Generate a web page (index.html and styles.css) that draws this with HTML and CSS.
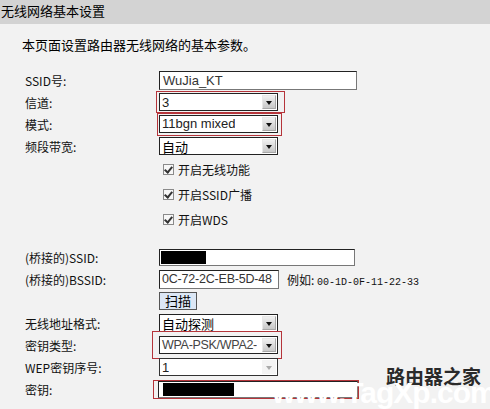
FILE: index.html
```html
<!DOCTYPE html>
<html lang="zh-CN">
<head>
    <meta charset="UTF-8">
    <title>无线网络基本设置</title>
    <link rel="stylesheet" href="styles.css">
</head>
<body>
    <div class="title-bar">无线网络基本设置</div>
    <p class="intro">本页面设置路由器无线网络的基本参数。</p>

    <div class="form">
        <div class="row">
            <div class="label">SSID号:</div>
            <div class="field"><div class="input wide">WuJia_KT</div></div>
        </div>
        <div class="row">
            <div class="label">信道:</div>
            <div class="field">
                <span class="mark mark-a">
                    <div class="select"><span class="val">3</span><span class="arrow"></span></div>
                </span>
            </div>
        </div>
        <div class="row">
            <div class="label">模式:</div>
            <div class="field">
                <span class="mark mark-b">
                    <div class="select"><span class="val">11bgn mixed</span><span class="arrow"></span></div>
                </span>
            </div>
        </div>
        <div class="row">
            <div class="label">频段带宽:</div>
            <div class="field">
                <div class="select"><span class="val cjk">自动</span><span class="arrow"></span></div>
            </div>
        </div>

        <div class="row check-row">
            <div class="label"></div>
            <div class="field"><span class="check"></span>开启无线功能</div>
        </div>
        <div class="row check-row">
            <div class="label"></div>
            <div class="field"><span class="check"></span>开启SSID广播</div>
        </div>
        <div class="row check-row">
            <div class="label"></div>
            <div class="field"><span class="check"></span>开启WDS</div>
        </div>

        <div class="row bridge-first">
            <div class="label">(桥接的)SSID:</div>
            <div class="field"><div class="input bridge"><span class="blackout b1"></span></div></div>
        </div>
        <div class="row">
            <div class="label">(桥接的)BSSID:</div>
            <div class="field">
                <div class="input short">0C-72-2C-EB-5D-48</div>
                <span class="example">例如: <span class="mono">00-1D-0F-11-22-33</span></span>
            </div>
        </div>
        <div class="row">
            <div class="label"></div>
            <div class="field"><button class="scan">扫描</button></div>
        </div>
        <div class="row">
            <div class="label">无线地址格式:</div>
            <div class="field">
                <div class="select"><span class="val cjk">自动探测</span><span class="arrow"></span></div>
            </div>
        </div>
        <div class="row">
            <div class="label">密钥类型:</div>
            <div class="field">
                <span class="mark mark-c">
                    <div class="select"><span class="val grey">WPA-PSK/WPA2-</span><span class="arrow"></span></div>
                </span>
            </div>
        </div>
        <div class="row">
            <div class="label">WEP密钥序号:</div>
            <div class="field">
                <div class="select disabled"><span class="val">1</span><span class="arrow"></span></div>
            </div>
        </div>
        <div class="row">
            <div class="label">密钥:</div>
            <div class="field">
                <span class="mark mark-d">
                    <div class="input key"><span class="blackout b2"></span></div>
                </span>
            </div>
        </div>
    </div>

    <div class="watermark">
        <div class="wm-cn">路由器之家</div>
        <div class="wm-en">www.TagXp.com</div>
    </div>
</body>
</html>
```

FILE: styles.css
```css
body {
    margin: 0;
    width: 490px;
    height: 409px;
    overflow: hidden;
    position: relative;
    background-color: #f2f2f2;
    font-family: "Noto Sans CJK SC", "DejaVu Sans", sans-serif;
    font-size: 12px;
    color: #111;
}
.title-bar {
    height: 24px;
    line-height: 22px;
    padding-left: 1px;
    background-color: #d3d3d3;
    font-size: 13px;
    color: #000;
}
.intro {
    margin: 11px 0 0 22px;
    font-size: 13px;
    line-height: 20px;
    color: #000;
}
.form {
    margin-top: 14px;
}
.row {
    display: flex;
    align-items: center;
    height: 22px;
}
.label {
    width: 134px;
    padding-left: 25px;
    flex-shrink: 0;
}
.field {
    display: flex;
    align-items: center;
}
.input {
    height: 17px;
    box-sizing: border-box;
    background: #fff;
    border: 1px solid #222;
    border-right-color: #777;
    border-bottom-color: #777;
    font-family: "Liberation Sans", sans-serif;
    font-size: 13px;
    line-height: 15px;
    color: #333;
    padding-left: 3px;
    display: flex;
    align-items: center;
    overflow: hidden;
    white-space: nowrap;
}
.input.wide {
    width: 198px;
    height: 19px;
}
.input.bridge {
    width: 196px;
    padding-left: 1px;
}
.input.short {
    width: 120px;
    height: 19px;
    padding-left: 2px;
    font-size: 12.5px;
    letter-spacing: -0.2px;
}
.input.key {
    width: 200px;
    padding-left: 4px;
}
.blackout {
    display: block;
    height: 13px;
    background: #000;
}
.b1 { width: 45px; }
.b2 { width: 71px; }
.example {
    margin-left: 8px;
}
.mono {
    font-family: "Liberation Mono", monospace;
    font-size: 10px;
}
.select {
    width: 119px;
    height: 18px;
    box-sizing: border-box;
    background: #fff;
    border: 1px solid #222;
    display: flex;
    align-items: center;
    justify-content: space-between;
    overflow: hidden;
}
.val {
    padding-left: 2px;
    font-family: "Liberation Sans", sans-serif;
    font-size: 13px;
    white-space: nowrap;
    overflow: hidden;
    color: #222;
}
.val.cjk {
    font-family: "Noto Sans CJK SC", sans-serif;
    font-size: 13px;
    color: #000;
}
.val.grey {
    color: #444;
    font-size: 12.5px;
    letter-spacing: -0.3px;
}
.arrow {
    width: 14px;
    height: 14px;
    margin-right: 1px;
    flex-shrink: 0;
    box-sizing: border-box;
    background: linear-gradient(#f0f0f0, #c8c8c8);
    border: 1px solid #a8a8a8;
    border-top-color: #e8e8e8;
    border-left-color: #e8e8e8;
    position: relative;
}
.arrow::after {
    content: "";
    position: absolute;
    left: 3px;
    top: 5px;
    border-left: 3.5px solid transparent;
    border-right: 3.5px solid transparent;
    border-top: 4px solid #111;
}
.select.disabled {
    border-color: #333;
}
.select.disabled .arrow {
    background: #f4f4f4;
    border-color: #f4f4f4;
}
.select.disabled .arrow::after {
    border-top-color: #aaa;
}
.mark {
    display: inline-flex;
    border: 1px solid #b5343a;
}
.mark-a {
    padding: 1px 6px 1px 2px;
    margin-left: -3px;
}
.mark-b {
    padding: 1px 3px 2px 1px;
    margin-left: -2px;
}
.mark-c {
    padding: 4px 3px 4px 6px;
    margin-left: -7px;
}
.mark-d {
    padding: 0 0 0 4px;
    margin-left: -6px;
}
.check-row {
    height: 25px;
    font-size: 12px;
}
.check {
    width: 11px;
    height: 11px;
    margin: 0 4px 0 4px;
    box-sizing: border-box;
    border: 1px solid #8a8a8a;
    background: #f7f7f7;
    position: relative;
}
.check::after {
    content: "";
    position: absolute;
    left: 2px;
    top: 0;
    width: 3px;
    height: 6px;
    border: solid #333;
    border-width: 0 2px 2px 0;
    transform: rotate(40deg);
}
.bridge-first {
    margin-top: 14px;
}
.scan {
    height: 18px;
    width: 38px;
    padding: 0;
    border: 1px solid #555;
    background: #dce7f5;
    font-family: "Noto Sans CJK SC", sans-serif;
    font-size: 13px;
    line-height: 16px;
    color: #000;
}
.watermark {
    position: absolute;
    left: 272px;
    top: 362px;
    width: 218px;
    height: 47px;
}
.wm-cn {
    position: absolute;
    right: 9px;
    top: 0;
    font-size: 19px;
    font-weight: bold;
    color: #2a2a2a;
}
.wm-en {
    position: absolute;
    left: 0;
    top: 16px;
    font-family: "Liberation Sans", sans-serif;
    font-size: 30px;
    line-height: 30px;
    font-weight: bold;
    letter-spacing: -1px;
    color: #fff;
}
```
